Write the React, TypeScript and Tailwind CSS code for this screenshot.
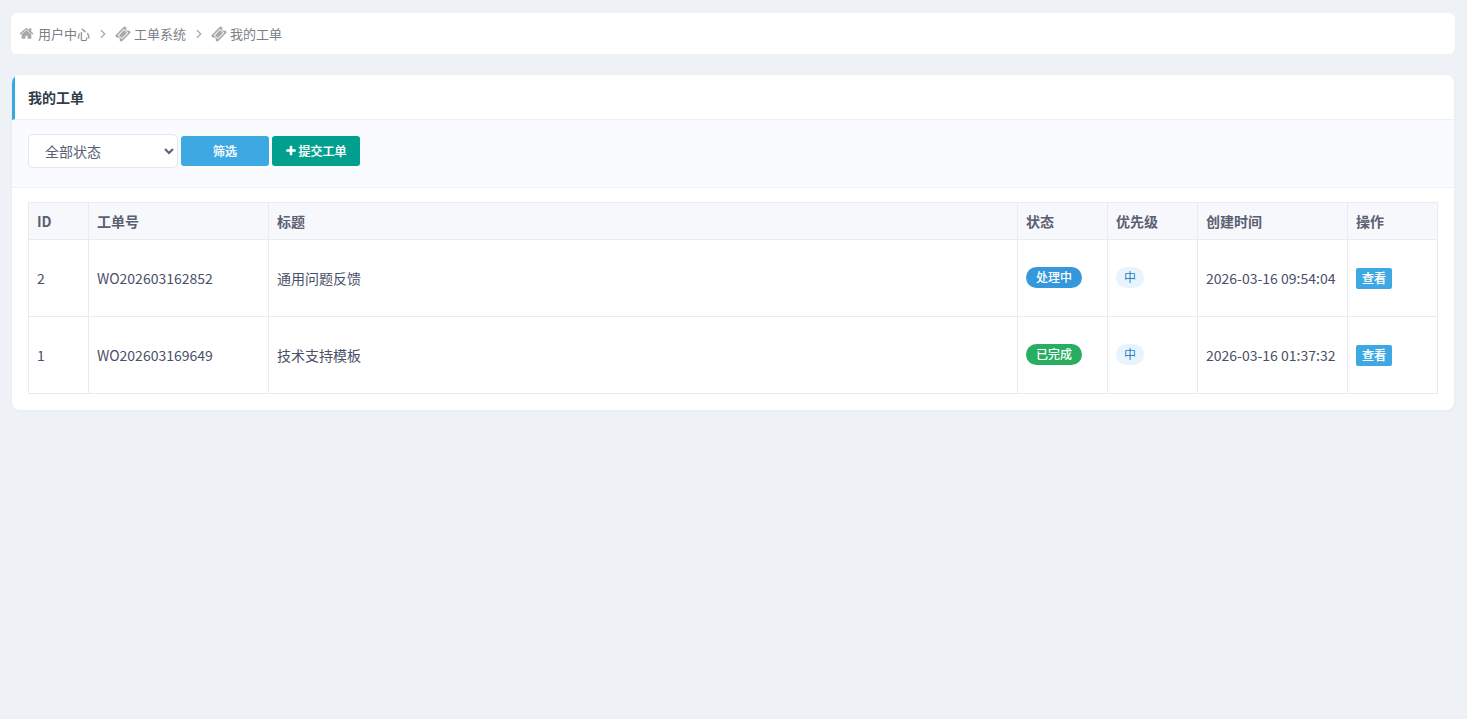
import React from "react";
import { LuChevronRight } from "react-icons/lu";

const rows = [
  {
    id: 2,
    no: "WO202603162852",
    title: "通用问题反馈",
    status: "处理中",
    statusClass: "bg-[#3498db]",
    time: "2026-03-16 09:54:04",
  },
  {
    id: 1,
    no: "WO202603169649",
    title: "技术支持模板",
    status: "已完成",
    statusClass: "bg-[#27ae60]",
    time: "2026-03-16 01:37:32",
  },
];

const thClass =
  "border border-[#e8ecf1] px-2 py-0 text-left text-[14px] font-bold text-[#5a6072]";
const tdClass = "border border-[#e8ecf1] px-2 py-0 text-[14px] text-[#4a5068]";

const HomeIcon = () => (
  <svg viewBox="0 0 1792 1792" className="h-[15px] w-[15px] fill-[#a6a8ad]">
    <path d="M1472 992v480q0 26-19 45t-45 19h-384v-384h-256v384h-384q-26 0-45-19t-19-45v-480q0-1 .5-3t.5-3l575-474 575 474q1 2 1 6zm223-69l-62 74q-8 9-21 11h-3q-13 0-21-7l-692-577-692 577q-12 8-24 7-13-2-21-11l-62-74q-8-10-7-23.5t11-21.5l719-599q32-26 76-26t76 26l244 204v-195q0-14 9-23t23-9h192q14 0 23 9t9 23v408l219 182q10 8 11 21.5t-7 23.5z" />
  </svg>
);

const TicketIcon = () => (
  <svg viewBox="0 0 1792 1792" className="h-[16px] w-[16px] fill-[#a6a8ad]">
    <path d="M1024 452l316 316-572 572-316-316zm-211 979l618-618q19-19 19-45t-19-45l-362-362q-18-18-45-18t-45 18l-618 618q-19 19-19 45t19 45l362 362q18 18 45 18t45-18zm889-637l-907 908q-37 37-90.5 37t-90.5-37l-126-126q56-56 56-136t-56-136-136-56-136 56l-125-126q-37-37-37-90.5t37-90.5l907-906q37-37 90.5-37t90.5 37l125 125q-56 56-56 136t56 136 136 56 136-56l126 125q37 37 37 90.5t-37 90.5z" />
  </svg>
);

const PlusIcon = () => (
  <svg viewBox="0 0 1792 1792" className="mr-[1px] h-[12px] w-[12px] fill-white">
    <path d="M1600 736v192q0 40-28 68t-68 28h-416v416q0 40-28 68t-68 28h-192q-40 0-68-28t-28-68v-416h-416q-40 0-68-28t-28-68v-192q0-40 28-68t68-28h416v-416q0-40 28-68t68-28h192q40 0 68 28t28 68v416h416q40 0 68 28t28 68z" />
  </svg>
);

const App: React.FC = () => {
  return (
    <div className="min-h-[719px] bg-[#eef1f6] pl-3 pr-[13px] pt-[13px] font-['Noto_Sans_CJK_SC',sans-serif]">
      <div className="-mx-px flex h-[41px] items-center rounded-md bg-white pl-2 text-[13px] text-[#7b7f88]">
        <HomeIcon />
        <span className="ml-[4px]">用户中心</span>
        <LuChevronRight size={14} className="ml-[6px] mr-[5px] mt-px text-[#a6a8ad]" />
        <TicketIcon />
        <span className="ml-[3px]">工单系统</span>
        <LuChevronRight size={14} className="ml-[6px] mr-[5px] mt-px text-[#a6a8ad]" />
        <TicketIcon />
        <span className="ml-[3px]">我的工单</span>
      </div>

      <div className="mt-[21px] overflow-hidden rounded-lg bg-white pb-4 shadow-[0_1px_3px_rgba(0,0,0,0.04)]">
        <div className="flex h-[45px] items-center border-b border-[#edf1f5] border-l-[3px] border-l-[#36a9e1] pl-[13px] text-[14px] font-bold text-[#2f3d4a]">
          我的工单
        </div>
        <div className="flex h-[68px] items-start border-b border-[#edf1f5] bg-[#f9fbfe] pl-4 pt-[14px]">
          <select className="h-[34px] w-[150px] rounded-[5px] border border-[#e3e7ee] bg-white pl-3 text-[14px] text-[#5a6072]">
            <option>全部状态</option>
          </select>
          <button className="mt-[2px] ml-[3px] h-[30px] w-[88px] rounded-[3px] bg-[#3ea8e2] text-[12px] font-medium text-white [-webkit-text-stroke:0.2px_white]">
            筛选
          </button>
          <button className="mt-[2px] ml-[3px] flex h-[30px] w-[88px] items-center justify-center rounded-[3px] bg-[#01a08e] text-[12px] font-medium text-white [-webkit-text-stroke:0.2px_white]">
            <PlusIcon />
            提交工单
          </button>
        </div>
        <div className="px-4 pt-[14px]">
          <table className="w-full table-fixed border-collapse">
            <colgroup>
              <col className="w-[60px]" />
              <col className="w-[180px]" />
              <col />
              <col className="w-[90px]" />
              <col className="w-[90px]" />
              <col className="w-[150px]" />
              <col className="w-[90px]" />
            </colgroup>
            <thead>
              <tr className="h-[37px] bg-[#f7f8fc]">
                <th className={thClass}>ID</th>
                <th className={thClass}>工单号</th>
                <th className={thClass}>标题</th>
                <th className={thClass}>状态</th>
                <th className={thClass}>优先级</th>
                <th className={thClass}>创建时间</th>
                <th className={thClass}>操作</th>
              </tr>
            </thead>
            <tbody>
              {rows.map((row) => (
                <tr key={row.id} className="h-[77px]">
                  <td className={tdClass}>{row.id}</td>
                  <td className={tdClass}>{row.no}</td>
                  <td className={tdClass}>{row.title}</td>
                  <td className={tdClass}>
                    <span
                      className={`mb-[2px] inline-flex h-[21px] w-[56px] items-center justify-center rounded-full text-[12px] font-medium text-white ${row.statusClass}`}
                    >
                      {row.status}
                    </span>
                  </td>
                  <td className={tdClass}>
                    <span className="mb-[2px] inline-flex h-[21px] w-[28px] items-center justify-center rounded-full bg-[#e8f4fd] text-[12px] text-[#2b80c5]">
                      中
                    </span>
                  </td>
                  <td className={`${tdClass} whitespace-nowrap`}>{row.time}</td>
                  <td className={tdClass}>
                    <button className="flex h-[21px] w-[36px] items-center justify-center rounded-[2px] bg-[#3ea8e2] text-[12px] font-medium text-white [-webkit-text-stroke:0.2px_white]">
                      查看
                    </button>
                  </td>
                </tr>
              ))}
            </tbody>
          </table>
        </div>
      </div>
    </div>
  );
};

export default App;
